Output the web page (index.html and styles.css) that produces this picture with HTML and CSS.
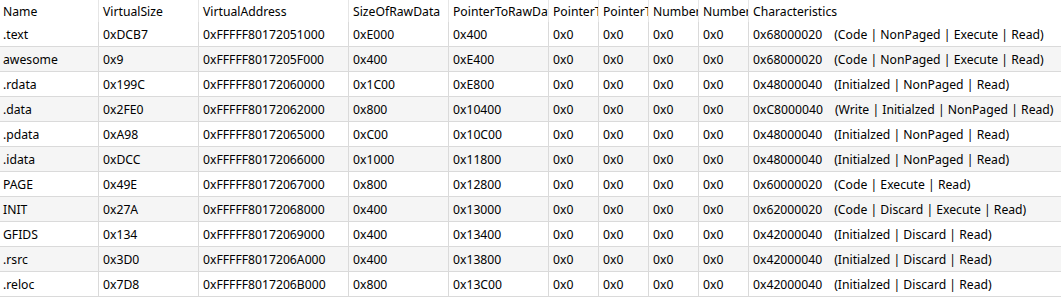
FILE: index.html
```html
<!DOCTYPE html>
<html>
<head>
<meta charset="utf-8">
<link rel="stylesheet" href="styles.css">
</head>
<body>
<div class="table">
  <div class="row head">
    <div class="c">Name</div><div class="c">VirtualSize</div><div class="c">VirtualAddress</div><div class="c">SizeOfRawData</div><div class="c">PointerToRawData</div><div class="c">PointerToRelocations</div><div class="c">PointerToLinenumbers</div><div class="c">NumberOfRelocations</div><div class="c">NumberOfLinenumbers</div><div class="c">Characteristics</div>
  </div>
  <div class="row"><div class="c">.text</div><div class="c">0xDCB7</div><div class="c">0xFFFFF80172051000</div><div class="c">0xE000</div><div class="c">0x400</div><div class="c">0x0</div><div class="c">0x0</div><div class="c">0x0</div><div class="c">0x0</div><div class="c">0x68000020<span class="flags">(Code | NonPaged | Execute | Read)</span></div></div>
  <div class="row"><div class="c">awesome</div><div class="c">0x9</div><div class="c">0xFFFFF8017205F000</div><div class="c">0x400</div><div class="c">0xE400</div><div class="c">0x0</div><div class="c">0x0</div><div class="c">0x0</div><div class="c">0x0</div><div class="c">0x68000020<span class="flags">(Code | NonPaged | Execute | Read)</span></div></div>
  <div class="row"><div class="c">.rdata</div><div class="c">0x199C</div><div class="c">0xFFFFF80172060000</div><div class="c">0x1C00</div><div class="c">0xE800</div><div class="c">0x0</div><div class="c">0x0</div><div class="c">0x0</div><div class="c">0x0</div><div class="c">0x48000040<span class="flags">(Initialzed | NonPaged | Read)</span></div></div>
  <div class="row"><div class="c">.data</div><div class="c">0x2FE0</div><div class="c">0xFFFFF80172062000</div><div class="c">0x800</div><div class="c">0x10400</div><div class="c">0x0</div><div class="c">0x0</div><div class="c">0x0</div><div class="c">0x0</div><div class="c">0xC8000040<span class="flags">(Write | Initialzed | NonPaged | Read)</span></div></div>
  <div class="row"><div class="c">.pdata</div><div class="c">0xA98</div><div class="c">0xFFFFF80172065000</div><div class="c">0xC00</div><div class="c">0x10C00</div><div class="c">0x0</div><div class="c">0x0</div><div class="c">0x0</div><div class="c">0x0</div><div class="c">0x48000040<span class="flags">(Initialzed | NonPaged | Read)</span></div></div>
  <div class="row"><div class="c">.idata</div><div class="c">0xDCC</div><div class="c">0xFFFFF80172066000</div><div class="c">0x1000</div><div class="c">0x11800</div><div class="c">0x0</div><div class="c">0x0</div><div class="c">0x0</div><div class="c">0x0</div><div class="c">0x48000040<span class="flags">(Initialzed | NonPaged | Read)</span></div></div>
  <div class="row"><div class="c">PAGE</div><div class="c">0x49E</div><div class="c">0xFFFFF80172067000</div><div class="c">0x800</div><div class="c">0x12800</div><div class="c">0x0</div><div class="c">0x0</div><div class="c">0x0</div><div class="c">0x0</div><div class="c">0x60000020<span class="flags">(Code | Execute | Read)</span></div></div>
  <div class="row"><div class="c">INIT</div><div class="c">0x27A</div><div class="c">0xFFFFF80172068000</div><div class="c">0x400</div><div class="c">0x13000</div><div class="c">0x0</div><div class="c">0x0</div><div class="c">0x0</div><div class="c">0x0</div><div class="c">0x62000020<span class="flags">(Code | Discard | Execute | Read)</span></div></div>
  <div class="row"><div class="c">GFIDS</div><div class="c">0x134</div><div class="c">0xFFFFF80172069000</div><div class="c">0x400</div><div class="c">0x13400</div><div class="c">0x0</div><div class="c">0x0</div><div class="c">0x0</div><div class="c">0x0</div><div class="c">0x42000040<span class="flags">(Initialzed | Discard | Read)</span></div></div>
  <div class="row"><div class="c">.rsrc</div><div class="c">0x3D0</div><div class="c">0xFFFFF8017206A000</div><div class="c">0x400</div><div class="c">0x13800</div><div class="c">0x0</div><div class="c">0x0</div><div class="c">0x0</div><div class="c">0x0</div><div class="c">0x42000040<span class="flags">(Initialzed | Discard | Read)</span></div></div>
  <div class="row"><div class="c">.reloc</div><div class="c">0x7D8</div><div class="c">0xFFFFF8017206B000</div><div class="c">0x800</div><div class="c">0x13C00</div><div class="c">0x0</div><div class="c">0x0</div><div class="c">0x0</div><div class="c">0x0</div><div class="c">0x42000040<span class="flags">(Initialzed | Discard | Read)</span></div></div>
</div>
</body>
</html>
```

FILE: styles.css
```css
html, body {
  margin: 0;
  padding: 0;
  background: #ffffff;
}
.table {
  font-family: "Noto Sans", "Noto Sans CJK SC", sans-serif;
  font-size: 12.2px;
  color: #000000;
  width: 1061px;
  overflow: hidden;
}
.row {
  display: grid;
  grid-template-columns: 99px 100px 150px 100px 100px 50px 50px 50px 50px 1fr;
  height: 25px;
  box-sizing: border-box;
  border-bottom: 1px solid #dadada;
}
.row.head {
  height: 22px;
  border-bottom: none;
}
.row:nth-child(odd):not(.head) {
  background: #f5f5f5;
}
.c {
  box-sizing: border-box;
  border-right: 1px solid #dadada;
  padding-left: 4px;
  padding-right: 3px;
  white-space: nowrap;
  overflow: hidden;
  display: flex;
  align-items: center;
}
.c:first-child {
  padding-left: 3px;
}
.c:last-child {
  border-right: none;
}
.head .c {
  border-right-color: #e6e6e6;
}
.flags {
  margin-left: 12px;
}
```
